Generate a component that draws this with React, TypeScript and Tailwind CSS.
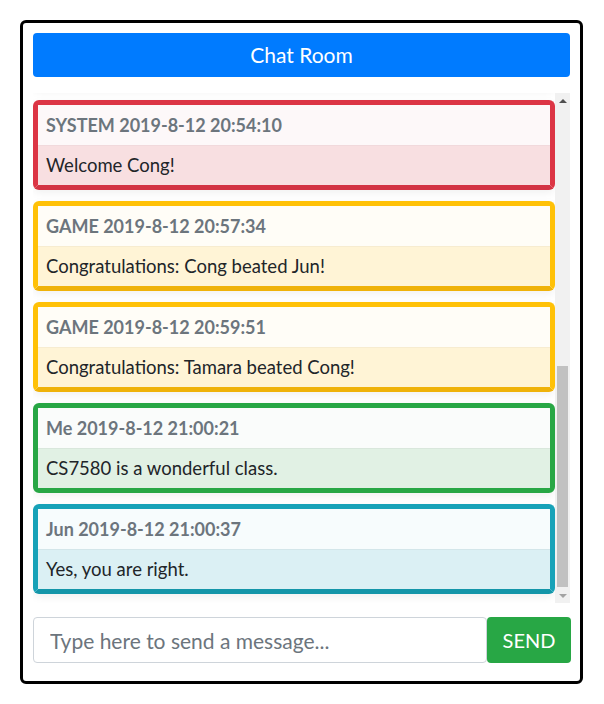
import React, { useEffect, useRef } from "react";

type Msg = { who: string; time: string; text: string; kind: "danger" | "warning" | "success" | "info" };

const messages: Msg[] = [
  { who: "SYSTEM", time: "2019-8-12 20:40:02", text: "Welcome Jun!", kind: "danger" },
  { who: "Jun", time: "2019-8-12 20:41:15", text: "Hello everyone!", kind: "info" },
  { who: "SYSTEM", time: "2019-8-12 20:43:48", text: "Welcome Tamara!", kind: "danger" },
  { who: "Me", time: "2019-8-12 20:44:30", text: "Hi Tamara!", kind: "success" },
  { who: "GAME", time: "2019-8-12 20:50:12", text: "Congratulations: Jun beated Tamara!", kind: "warning" },
  { who: "Jun", time: "2019-8-12 20:51:07", text: "Good game.", kind: "info" },
  { who: "SYSTEM", time: "2019-8-12 20:54:10", text: "Welcome Cong!", kind: "danger" },
  { who: "GAME", time: "2019-8-12 20:57:34", text: "Congratulations: Cong beated Jun!", kind: "warning" },
  { who: "GAME", time: "2019-8-12 20:59:51", text: "Congratulations: Tamara beated Cong!", kind: "warning" },
  { who: "Me", time: "2019-8-12 21:00:21", text: "CS7580 is a wonderful class.", kind: "success" },
  { who: "Jun", time: "2019-8-12 21:00:37", text: "Yes, you are right.", kind: "info" },
];

const styles = {
  danger: { card: "border-[#dc3545] border-b-[#d33343]", head: "bg-[#fdf8f9] border-[#f1d9dc]", body: "bg-[#f8dfe1]" },
  warning: { card: "border-[#ffc107] border-b-[#efb20a]", head: "bg-[#fffdf7] border-[#f7ecd0]", body: "bg-[#fff4d6]" },
  success: { card: "border-[#28a745]", head: "bg-[#fafcfb] border-[#d9e7dc]", body: "bg-[#e1f1e4]" },
  info: { card: "border-[#17a2b8] border-b-[#1496a9]", head: "bg-[#f7fcfd] border-[#d3e6ea]", body: "bg-[#dbf0f4]" },
};

function Card({ m }: { m: Msg }) {
  const s = styles[m.kind];
  return (
    <div className={`shrink-0 rounded-[6px] border-[5px] ${s.card} shadow-[0_3px_8px_rgba(0,0,0,0.06)] overflow-hidden`}>
      <div className={`h-[41px] flex items-center px-[8px] pt-[1px] border-b text-[18px] font-bold text-[#6c757d] ${s.head}`}>
        {m.who} {m.time}
      </div>
      <div className={`h-[39px] flex items-center px-[8px] pt-[1px] text-[18.5px] text-[#212529] ${s.body}`}>
        {m.text}
      </div>
    </div>
  );
}

export default function App() {
  const ref = useRef<HTMLDivElement>(null);
  useEffect(() => {
    if (ref.current) ref.current.scrollTop = ref.current.scrollHeight;
  }, []);
  return (
    <div style={{ fontFamily: "Lato, 'Noto Sans', sans-serif" }} className="p-[20px] w-[604px]">
      <div className="w-[563px] border-[3px] border-black rounded-[6px] px-[10px] pt-[10px] pb-[18px] bg-white">
        <div className="h-[44px] rounded-[4px] bg-[#007bff] text-white text-[21px] flex items-center justify-center">
          Chat Room
        </div>
        <div className="mt-4 h-[510px] flex">
          <div
            ref={ref}
            className="flex-1 h-full overflow-y-scroll flex flex-col gap-[11px] pb-[9px] [scrollbar-width:none] [&::-webkit-scrollbar]:hidden"
          >
            {messages.map((m, i) => (
              <Card key={i} m={m} />
            ))}
          </div>
          <div className="w-[15px] h-full bg-[#f1f1f1] flex flex-col items-center">
            <div className="h-[15px] w-full flex items-center justify-center">
              <div className="w-0 h-0 border-l-[4px] border-r-[4px] border-b-[4px] border-l-transparent border-r-transparent border-b-[#505050]" />
            </div>
            <div className="flex-1 w-full flex flex-col justify-end px-[2px]">
              <div className="h-[221px] w-full bg-[#c1c1c1] mb-[1px]" />
            </div>
            <div className="h-[15px] w-full flex items-center justify-center">
              <div className="w-0 h-0 border-l-[4px] border-r-[4px] border-t-[4px] border-l-transparent border-r-transparent border-t-[#a3a3a3]" />
            </div>
          </div>
        </div>
        <div className="mt-[14px] flex w-[538px]">
          <input
            placeholder="Type here to send a message..."
            className="w-[454px] h-[46px] border border-[#ced4da] rounded-[4px] px-[16px] text-[21px] text-[#495057] placeholder:text-[#6c757d] outline-none"
          />
          <button className="w-[84px] h-[46px] bg-[#28a745] text-white text-[20px] rounded-[4px]">SEND</button>
        </div>
      </div>
    </div>
  );
}
